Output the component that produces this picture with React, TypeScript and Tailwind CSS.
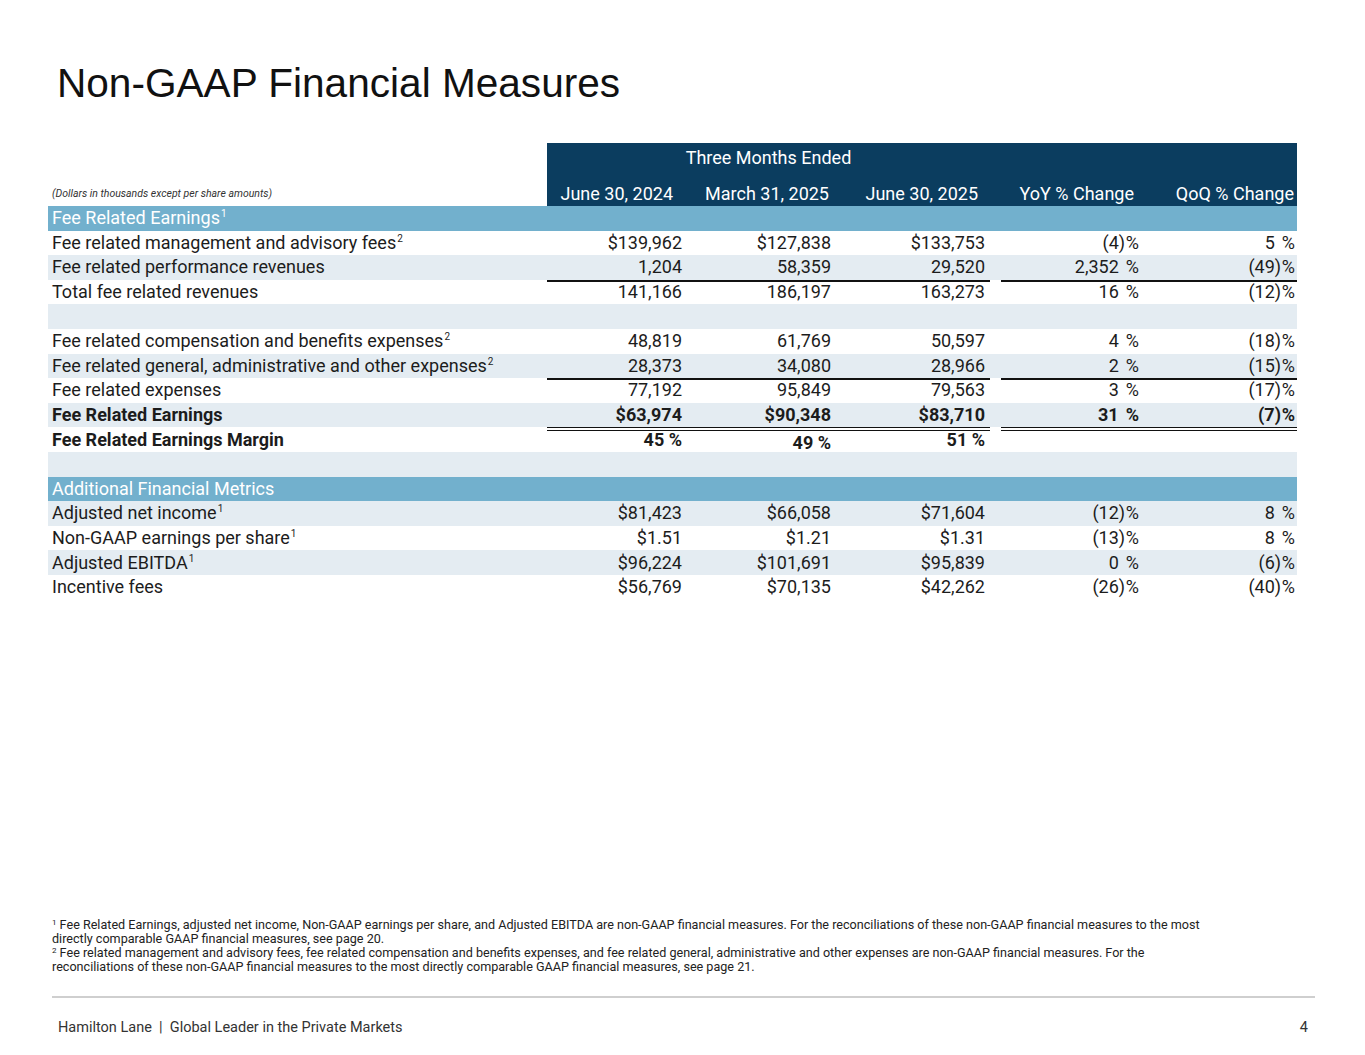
import { FC, ReactNode } from "react";

type Line = "single" | "double";

interface Row {
  label?: string;
  sup?: string;
  vals?: [string, string, string];
  yoy?: string;
  qoq?: string;
  bg: "white" | "light" | "section";
  bold?: boolean;
  lineAbove?: Line;
}

const ROWS: Row[] = [
  { label: "Fee Related Earnings", sup: "1", bg: "section" },
  { label: "Fee related management and advisory fees", sup: "2", vals: ["$139,962", "$127,838", "$133,753"], yoy: "(4)", qoq: "5", bg: "white" },
  { label: "Fee related performance revenues", vals: ["1,204", "58,359", "29,520"], yoy: "2,352", qoq: "(49)", bg: "light" },
  { label: "Total fee related revenues", vals: ["141,166", "186,197", "163,273"], yoy: "16", qoq: "(12)", bg: "white", lineAbove: "single" },
  { bg: "light" },
  { label: "Fee related compensation and benefits expenses", sup: "2", vals: ["48,819", "61,769", "50,597"], yoy: "4", qoq: "(18)", bg: "white" },
  { label: "Fee related general, administrative and other expenses", sup: "2", vals: ["28,373", "34,080", "28,966"], yoy: "2", qoq: "(15)", bg: "light" },
  { label: "Fee related expenses", vals: ["77,192", "95,849", "79,563"], yoy: "3", qoq: "(17)", bg: "white", lineAbove: "single" },
  { label: "Fee Related Earnings", vals: ["$63,974", "$90,348", "$83,710"], yoy: "31", qoq: "(7)", bg: "light", bold: true },
  { label: "Fee Related Earnings Margin", vals: ["45 %", "49 %", "51 %"], bg: "white", bold: true, lineAbove: "double" },
  { bg: "light" },
  { label: "Additional Financial Metrics", bg: "section" },
  { label: "Adjusted net income", sup: "1", vals: ["$81,423", "$66,058", "$71,604"], yoy: "(12)", qoq: "8", bg: "light" },
  { label: "Non-GAAP earnings per share", sup: "1", vals: ["$1.51", "$1.21", "$1.31"], yoy: "(13)", qoq: "8", bg: "white" },
  { label: "Adjusted EBITDA", sup: "1", vals: ["$96,224", "$101,691", "$95,839"], yoy: "0", qoq: "(6)", bg: "light" },
  { label: "Incentive fees", vals: ["$56,769", "$70,135", "$42,262"], yoy: "(26)", qoq: "(40)", bg: "white" },
];

const COLS = "grid-cols-[499px_141px_148px_154px_11px_144px_152px]";

const bgClass = (bg: Row["bg"]) =>
  bg === "section" ? "bg-[#72b0cd]" : bg === "light" ? "bg-[#e4ecf2]" : "bg-white";

// bottom padding equal to the rule keeps the figures level with the label
const lineClass = (line?: Line) =>
  line === "double"
    ? "border-t-4 border-double border-[#111] pb-[4px]"
    : line === "single"
    ? "border-t-2 border-[#111] pb-[2px]"
    : "";

// accounting style percent: "(4)%" vs "5 %"
const Pct: FC<{ v?: string }> = ({ v }) => {
  if (!v) return null;
  const neg = v.startsWith("(");
  return (
    <span className="inline-flex items-baseline">
      <span>{neg ? v.slice(0, -1) : v}</span>
      <span className="inline-block w-[7px] text-left">{neg ? ")" : ""}</span>
      <span>%</span>
    </span>
  );
};

const Sup: FC<{ n: string }> = ({ n }) => (
  <span className="relative -top-[7px] ml-[1px] text-[10px] leading-none">{n}</span>
);

const NoteSup: FC<{ n: string }> = ({ n }) => (
  <span className="relative -top-[4px] text-[8px] leading-none">{n}</span>
);

const Cell: FC<{ children?: ReactNode; className?: string }> = ({ children, className }) => (
  <div className={`flex h-full min-h-0 items-center justify-end ${className ?? ""}`}>{children}</div>
);

const TableRow: FC<{ row: Row }> = ({ row }) => {
  const line = lineClass(row.lineAbove);
  const isSection = row.bg === "section";
  return (
    <div
      className={`grid h-[24.6px] grid-rows-1 ${COLS} ${bgClass(row.bg)} ${row.bold ? "font-bold" : ""} ${
        isSection ? "text-white" : "text-[#1c1c1c]"
      }`}
    >
      <div className="flex h-full items-center whitespace-nowrap pl-1">
        <span>
          {row.label}
          {row.sup && <Sup n={row.sup} />}
        </span>
      </div>
      <Cell className={`pr-[6px] ${line}`}>{row.vals?.[0]}</Cell>
      <Cell className={`pr-[5px] ${line}`}>
        <span className={row.label === "Fee Related Earnings Margin" ? "translate-y-[3px]" : ""}>{row.vals?.[1]}</span>
      </Cell>
      <Cell className={`pr-[5px] ${line}`}>{row.vals?.[2]}</Cell>
      <div />
      <Cell className={`pr-[6px] ${line}`}>
        <Pct v={row.yoy} />
      </Cell>
      <Cell className={`pr-[2px] ${line}`}>
        <Pct v={row.qoq} />
      </Cell>
    </div>
  );
};

const App: FC = () => {
  return (
    <div
      className="flex h-[1055px] w-[1365px] flex-col bg-white text-[#1c1c1c]"
      style={{ fontFamily: "Roboto, 'Liberation Sans', sans-serif" }}
    >
      {/* TITLE */}
      <h1
        className="pl-[57px] pt-[63px] text-[40.6px] leading-[40px] text-[#111]"
        style={{ fontFamily: "'Liberation Sans', Arial, sans-serif" }}
      >
        Non-GAAP Financial Measures
      </h1>

      {/* TABLE */}
      <div className="ml-[48px] mt-[40px] w-[1249px] text-[18px] leading-[18px]">
        {/* header */}
        <div className="grid grid-cols-[499px_750px]">
          <div />
          <div className="grid h-[32px] grid-cols-[443px_307px] bg-[#0b3d5f] text-white">
            <div className="flex items-end justify-center pb-[8px]">Three Months Ended</div>
            <div />
          </div>
        </div>
        <div className={`grid h-[31px] ${COLS}`}>
          <div className="flex items-end whitespace-nowrap pb-[3px] pl-1 text-[10.5px] italic text-[#333]">
            (Dollars in thousands except per share amounts)
          </div>
          <div className="flex items-end justify-end bg-[#0b3d5f] pb-[3px] pr-[15px] text-white">June 30, 2024</div>
          <div className="flex items-end justify-end bg-[#0b3d5f] pb-[3px] pr-[7px] text-white">March 31, 2025</div>
          <div className="flex items-end justify-end bg-[#0b3d5f] pb-[3px] pr-[12px] text-white">June 30, 2025</div>
          <div className="bg-[#0b3d5f]" />
          <div className="flex items-end justify-end bg-[#0b3d5f] pb-[3px] pr-[11px] text-white">YoY % Change</div>
          <div className="flex items-end justify-end bg-[#0b3d5f] pb-[3px] pr-[3px] text-white">QoQ % Change</div>
        </div>

        {ROWS.map((row, i) => (
          <TableRow key={i} row={row} />
        ))}
      </div>

      <div className="flex-1" />

      {/* FOOTNOTES */}
      <div className="whitespace-nowrap pl-[52px] text-[12.6px] leading-[14px] text-[#222]">
        <p>
          <NoteSup n="1" /> Fee Related Earnings, adjusted net income, Non-GAAP earnings per share, and Adjusted EBITDA
          are non-GAAP financial measures. For the reconciliations of these non-GAAP financial measures to the most
          <br />
          directly comparable GAAP financial measures, see page 20.
        </p>
        <p>
          <NoteSup n="2" /> Fee related management and advisory fees, fee related compensation and benefits expenses, and
          fee related general, administrative and other expenses are non-GAAP financial measures. For the
          <br />
          reconciliations of these non-GAAP financial measures to the most directly comparable GAAP financial measures,
          see page 21.
        </p>
      </div>

      {/* DIVIDER */}
      <div className="ml-[52px] mt-[22px] h-[2px] w-[1263px] bg-[#cfcfcf]" />

      {/* FOOTER */}
      <div className="mb-[19px] mt-[22px] flex items-center justify-between pl-[58px] pr-[57px] text-[14.5px] leading-[16px] text-[#333]">
        <span>Hamilton Lane&nbsp;&nbsp;|&nbsp;&nbsp;Global Leader in the Private Markets</span>
        <span>4</span>
      </div>
    </div>
  );
};

export default App;
